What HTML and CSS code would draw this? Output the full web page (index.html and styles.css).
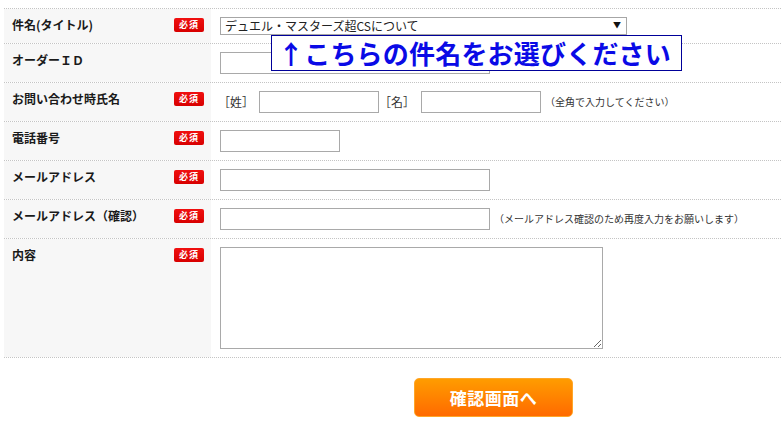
FILE: index.html
```html
<!DOCTYPE html>
<html lang="ja">
<head>
<meta charset="utf-8">
<title>お問い合わせ</title>
<link rel="stylesheet" href="styles.css">
</head>
<body>
<div class="page">
  <div class="form">
    <div class="row">
      <div class="label"><span class="ltext">件名(タイトル)</span><span class="req">必須</span></div>
      <div class="value">
        <span class="select-wrap">
          <select class="select"><option>デュエル・マスターズ超CSについて</option></select>
          <span class="arrow">▼</span>
        </span>
      </div>
    </div>
    <div class="row">
      <div class="label"><span class="ltext">オーダーＩＤ</span></div>
      <div class="value"><input class="input wide" type="text"></div>
    </div>
    <div class="row">
      <div class="label"><span class="ltext">お問い合わせ時氏名</span><span class="req">必須</span></div>
      <div class="value inline">
        <span class="bracket">［姓］</span>
        <input class="input short first" type="text">
        <span class="bracket gap">［名］</span>
        <input class="input short second" type="text">
        <span class="note">（全角で入力してください）</span>
      </div>
    </div>
    <div class="row">
      <div class="label"><span class="ltext">電話番号</span><span class="req">必須</span></div>
      <div class="value"><input class="input short" type="text"></div>
    </div>
    <div class="row">
      <div class="label"><span class="ltext">メールアドレス</span><span class="req">必須</span></div>
      <div class="value"><input class="input wide" type="text"></div>
    </div>
    <div class="row">
      <div class="label"><span class="ltext">メールアドレス（確認）</span><span class="req">必須</span></div>
      <div class="value inline">
        <input class="input wide" type="text">
        <span class="note">（メールアドレス確認のため再度入力をお願いします）</span>
      </div>
    </div>
    <div class="row">
      <div class="label"><span class="ltext">内容</span><span class="req">必須</span></div>
      <div class="value"><textarea class="textarea"></textarea></div>
    </div>
    <div class="callout">↑こちらの件名をお選びください</div>
  </div>
  <div class="actions">
    <button class="submit" type="button">確認画面へ</button>
  </div>
</div>
</body>
</html>
```

FILE: styles.css
```css
html, body {
  margin: 0;
  padding: 0;
  background: #ffffff;
  overflow: hidden;
}

body {
  font-family: "Noto Sans CJK JP", "Liberation Sans", sans-serif;
  color: #222;
}

.page {
  padding: 8px 0 0 4px;
}

.form {
  position: relative;
  width: 777px;
  border-top: 1px dotted #c4c4c4;
}

.row {
  display: grid;
  grid-template-columns: 207px 1fr;
  border-bottom: 1px dotted #c4c4c4;
}

.label {
  background: #f7f7f7;
  padding: 8px 7px 8px 8px;
  display: flex;
  justify-content: space-between;
  align-items: flex-start;
}

.ltext {
  font-size: 12px;
  line-height: 16px;
  font-weight: bold;
  color: #1a1a1a;
}

.req {
  margin-top: 1px;
  width: 30px;
  height: 14px;
  border-radius: 2px;
  background: linear-gradient(#f01010, #d80000);
  color: #fff;
  font-size: 9px;
  font-weight: bold;
  line-height: 14px;
  text-align: center;
  letter-spacing: 1px;
}

.value {
  padding: 8px 9px;
}

.value.inline {
  display: flex;
  align-items: center;
}

.select-wrap {
  position: relative;
  display: block;
  width: 407px;
  height: 18px;
}

.select {
  appearance: none;
  -webkit-appearance: none;
  display: block;
  width: 407px;
  height: 18px;
  margin: 0;
  padding: 0 0 0 4px;
  border: 1px solid #a6a6a6;
  border-radius: 0;
  background: #fff;
  font-family: "Noto Sans CJK JP", sans-serif;
  font-size: 12px;
  line-height: 16px;
  color: #222;
}

.arrow {
  position: absolute;
  right: 6px;
  top: 3px;
  font-size: 8px;
  line-height: 10px;
  color: #111;
  pointer-events: none;
}

.input {
  display: block;
  box-sizing: border-box;
  height: 22px;
  margin: 0;
  padding: 0 3px;
  border: 1px solid #a9a9a9;
  border-radius: 0;
  background: #fff;
}

.input.wide {
  width: 270px;
}

.input.short {
  width: 120px;
}

.input.first {
  margin-left: 5px;
}

.input.second {
  margin-left: 6px;
}

.bracket {
  font-size: 12px;
  line-height: 16px;
  color: #333;
  margin-left: -2px;
}

.bracket.gap {
  margin-left: 0;
}

.note {
  font-size: 10px;
  line-height: 14px;
  color: #333;
  margin-left: 4px;
}

.textarea {
  display: block;
  box-sizing: border-box;
  width: 383px;
  height: 102px;
  margin: 0;
  border: 1px solid #a9a9a9;
  border-radius: 0;
  resize: both;
}

.callout {
  position: absolute;
  left: 267px;
  top: 26px;
  width: 403px;
  height: 34px;
  border: 1px solid #000099;
  background: #fff;
  color: #0a0ae6;
  font-size: 26px;
  font-weight: bold;
  line-height: 34px;
  letter-spacing: 0.2px;
  padding-left: 6px;
  box-sizing: content-box;
  white-space: nowrap;
  overflow: hidden;
}

.actions {
  padding: 20px 0 0 410px;
}

.submit {
  display: block;
  width: 159px;
  height: 39px;
  border: 1px solid #ffa628;
  border-radius: 5px;
  background: linear-gradient(#ff9c00, #ff6a00);
  color: #fff;
  font-family: "Noto Sans CJK JP", sans-serif;
  font-size: 17px;
  font-weight: bold;
  letter-spacing: 0.5px;
  padding: 0;
}
```
